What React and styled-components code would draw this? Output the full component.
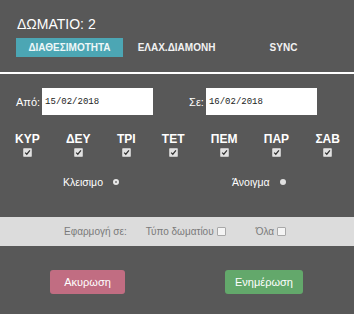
import React, { useState } from 'react'
import styled, { createGlobalStyle } from 'styled-components'

const GlobalStyle = createGlobalStyle`
    body {
        margin: 0;
        background: #585858;
        font-family: "Liberation Sans", Arial, sans-serif;
    }
`;

const Panel = styled.div`
    width: 354px;
    height: 314px;
    box-sizing: border-box;
    background-color: #585858;
    color: white;
    display: flex;
    flex-direction: column;
    overflow: hidden;
`;

const Header = styled.div`
    padding: 15px 16px 0;
    box-sizing: border-box;
    border-bottom: 2px solid white;
    height: 74px;
`;

const Title = styled.div`
    font-size: 14px;
    line-height: 18px;
    height: 20px;
    padding-left: 1px;
`;

const Tabs = styled.div`
    display: flex;
    margin-top: 3px;
`;

const Tab = styled.div`
    width: 107px;
    height: 19px;
    display: flex;
    align-items: center;
    justify-content: center;
    font-size: 10px;
    font-weight: bold;
    background-color: ${props => props.active ? "#4ca6b4" : "transparent"};
    color: ${props => props.active ? "#eef7f8" : "#f2f2f2"};
    cursor: pointer;
`;

const DateRow = styled.div`
    display: flex;
    align-items: center;
    margin-top: 14px;
    padding-left: 16px;
`;

const DateField = styled.label`
    display: flex;
    align-items: center;
    gap: 2px;
    font-size: 11px;
    margin-right: ${props => props.gap || 0}px;
`;

const DateInput = styled.input`
    width: 111px;
    height: 27px;
    box-sizing: border-box;
    border: none;
    padding: 0 3px;
    font-family: "Liberation Mono", "DejaVu Sans Mono", monospace;
    font-size: 9px;
    color: #222;
    outline: none;
`;

const Days = styled.div`
    display: flex;
    justify-content: space-between;
    padding: 0 14px 0 15px;
    margin-top: 17px;
`;

const Day = styled.div`
    display: flex;
    flex-direction: column;
    align-items: center;
    gap: 2px;
    font-size: 12px;
    font-weight: bold;
`;

const Box = styled.span`
    width: 7px;
    height: 7px;
    background: ${props => props.dark ? "#f4f4f4" : "#e2e2e2"};
    border: 1px solid ${props => props.dark ? "#a8a8a8" : "#c4c4c4"};
    border-radius: 1px;
    display: inline-flex;
    align-items: center;
    justify-content: center;
    & > svg {
        width: 7px;
        height: 7px;
    }
`;

const Check = ({ checked, dark }) => (
    <Box dark={dark}>
        {checked && (
            <svg viewBox="0 0 8 8">
                <path d="M1.3 4.2 L3.2 6 L6.8 1.6" fill="none" stroke="#333" strokeWidth="1.4" />
            </svg>
        )}
    </Box>
);

const Radios = styled.div`
    display: flex;
    margin-top: 19px;
    padding-left: 63px;
    font-size: 10.5px;
`;

const RadioItem = styled.label`
    display: flex;
    flex: none;
    align-items: center;
    gap: 10px;
    width: ${props => props.w ? props.w + "px" : "auto"};
`;

const Dot = styled.span`
    width: 6px;
    height: 6px;
    border-radius: 50%;
    box-sizing: border-box;
    border: ${props => props.ring ? "2px solid #e8e8e8" : "none"};
    background: ${props => props.ring ? "#777" : "#e0e0e0"};
`;

const Band = styled.div`
    margin-top: 29px;
    height: 29px;
    background-color: #dcdcdc;
    color: #7a7a7a;
    font-size: 10px;
    display: flex;
    align-items: center;
    padding-left: 64px;
`;

const BandItem = styled.span`
    display: flex;
    align-items: center;
    gap: 3px;
    margin-right: ${props => props.gap || 0}px;
`;

const Buttons = styled.div`
    display: flex;
    margin-top: 24px;
    padding-left: 50px;
`;

const Button = styled.button`
    height: 24px;
    width: ${props => props.w}px;
    margin-right: ${props => props.gap || 0}px;
    border: none;
    border-radius: 3px;
    color: white;
    font-family: "Liberation Sans", Arial, sans-serif;
    font-size: 11px;
    background-color: ${props => props.bg};
    cursor: pointer;
`;

const days = ["ΚΥΡ", "ΔΕΥ", "ΤΡΙ", "ΤΕΤ", "ΠΕΜ", "ΠΑΡ", "ΣΑΒ"];

const App = () => {
    const [tab, setTab] = useState(0);

    return (
        <Panel>
            <GlobalStyle />
            <Header>
                <Title>ΔΩΜΑΤΙΟ: 2</Title>
                <Tabs>
                    {["ΔΙΑΘΕΣΙΜΟΤΗΤΑ", "ΕΛΑΧ.ΔΙΑΜΟΝΗ", "SYNC"].map((t, i) => (
                        <Tab key={t} active={tab === i} onClick={() => setTab(i)}>{t}</Tab>
                    ))}
                </Tabs>
            </Header>

            <DateRow>
                <DateField gap={36}>Από:<DateInput defaultValue="15/02/2018" /></DateField>
                <DateField>Σε:<DateInput defaultValue="16/02/2018" /></DateField>
            </DateRow>

            <Days>
                {days.map(d => (
                    <Day key={d}>
                        {d}
                        <Check checked />
                    </Day>
                ))}
            </Days>

            <Radios>
                <RadioItem w={169}>Κλεισιμο <Dot ring /></RadioItem>
                <RadioItem>Άνοιγμα <Dot /></RadioItem>
            </Radios>

            <Band>
                <BandItem gap={19}>Εφαρμογή σε:</BandItem>
                <BandItem gap={30}>Τύπο δωματίου <Check dark /></BandItem>
                <BandItem>Όλα <Check dark /></BandItem>
            </Band>

            <Buttons>
                <Button w={75} gap={100} bg="#c16d82">Ακυρωση</Button>
                <Button w={78} bg="#63a86b">Ενημέρωση</Button>
            </Buttons>
        </Panel>
    )
}

export default App
